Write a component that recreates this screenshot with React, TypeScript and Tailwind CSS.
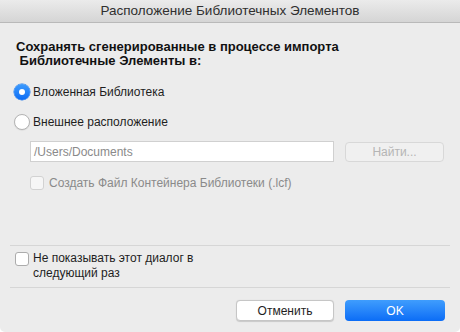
const Radio = ({ checked }: { checked: boolean }) =>
  checked ? (
    <span className="flex h-[16px] w-[16px] shrink-0 items-center justify-center rounded-full bg-gradient-to-b from-[#3d9bfd] to-[#0a6cf5] shadow-[0_0_0_0.5px_#1a75e8]">
      <span className="h-[6px] w-[6px] rounded-full bg-white" />
    </span>
  ) : (
    <span className="block h-[16px] w-[16px] shrink-0 rounded-full border border-[#b4b4b4] bg-white shadow-[0_0.5px_1px_rgba(0,0,0,0.1)]" />
  );

const Checkbox = ({ disabled }: { disabled?: boolean }) => (
  <span
    className={
      "block h-[14px] w-[14px] shrink-0 rounded-[3px] border " +
      (disabled ? "border-[#d2d2d2] bg-[#f6f6f6]" : "border-[#acacac] bg-white")
    }
  />
);

export default function App() {
  return (
    <div
      className="h-[332px] w-[460px] bg-white text-[12px] leading-[16px] text-[#1e1e1e]"
      style={{ fontFamily: '"Liberation Sans", Arial, sans-serif' }}
    >
      <div className="flex h-full w-full flex-col overflow-hidden rounded-b-[5px] bg-[#ececec]">
        {/* title bar */}
        <div className="flex h-[23px] shrink-0 items-center justify-center border-b border-[#b9b9b9] bg-gradient-to-b from-[#ebebeb] to-[#d5d5d5] text-[13.5px] text-[#2f2f2f]">
          Расположение Библиотечных Элементов
        </div>

        <div className="px-[16px] pt-[17px]">
          <div className="text-[13px] font-bold leading-[14px] text-[#111]">
            Сохранять сгенерированные в процессе импорта
            <br />
            &nbsp;Библиотечные Элементы в:
          </div>

          <div className="-ml-[2px] mt-[16px] flex items-center gap-[3px]">
            <Radio checked />
            <span>Вложенная Библиотека</span>
          </div>
          <div className="-ml-[2px] mt-[14px] flex items-center gap-[3px]">
            <Radio checked={false} />
            <span>Внешнее расположение</span>
          </div>

          <div className="ml-[14px] mt-[11px] flex items-center gap-[11px]">
            <div className="flex h-[21px] w-[304px] items-center border border-[#d0d0d0] bg-white px-[3px] text-[#8a8a8a]">
              /Users/Documents
            </div>
            <div className="flex h-[20px] w-[99px] items-center justify-center rounded-[4px] border border-[#d8d8d8] bg-[#f0f0f0] text-[#b5b5b5]">
              Найти...
            </div>
          </div>

          <div className="ml-[14px] mt-[13px] flex items-center gap-[5px] text-[#8a8a8a]">
            <Checkbox disabled />
            <span>Создать Файл Контейнера Библиотеки (.lcf)</span>
          </div>
        </div>

        <div className="flex-1" />

        <div className="mx-[10px] border-t border-[#d6d6d6]" />
        <div className="flex items-start gap-[4px] px-[15px] pb-[6px] pt-[5px]">
          <div className="pt-[1px]">
            <Checkbox />
          </div>
          <span className="leading-[15px]">
            Не показывать этот диалог в
            <br />
            следующий раз
          </span>
        </div>
        <div className="mx-[10px] border-t border-[#d6d6d6]" />

        <div className="flex justify-end gap-[11px] px-[15px] pb-[11px] pt-[12px]">
          <div className="flex h-[21px] w-[98px] items-center justify-center rounded-[4px] border border-[#c6c6c6] bg-white shadow-[0_0.5px_1px_rgba(0,0,0,0.15)]">
            Отменить
          </div>
          <div className="flex h-[21px] w-[100px] items-center justify-center rounded-[4px] bg-gradient-to-b from-[#3f9dfd] to-[#0a6cf6] text-white">
            OK
          </div>
        </div>
      </div>
    </div>
  );
}
